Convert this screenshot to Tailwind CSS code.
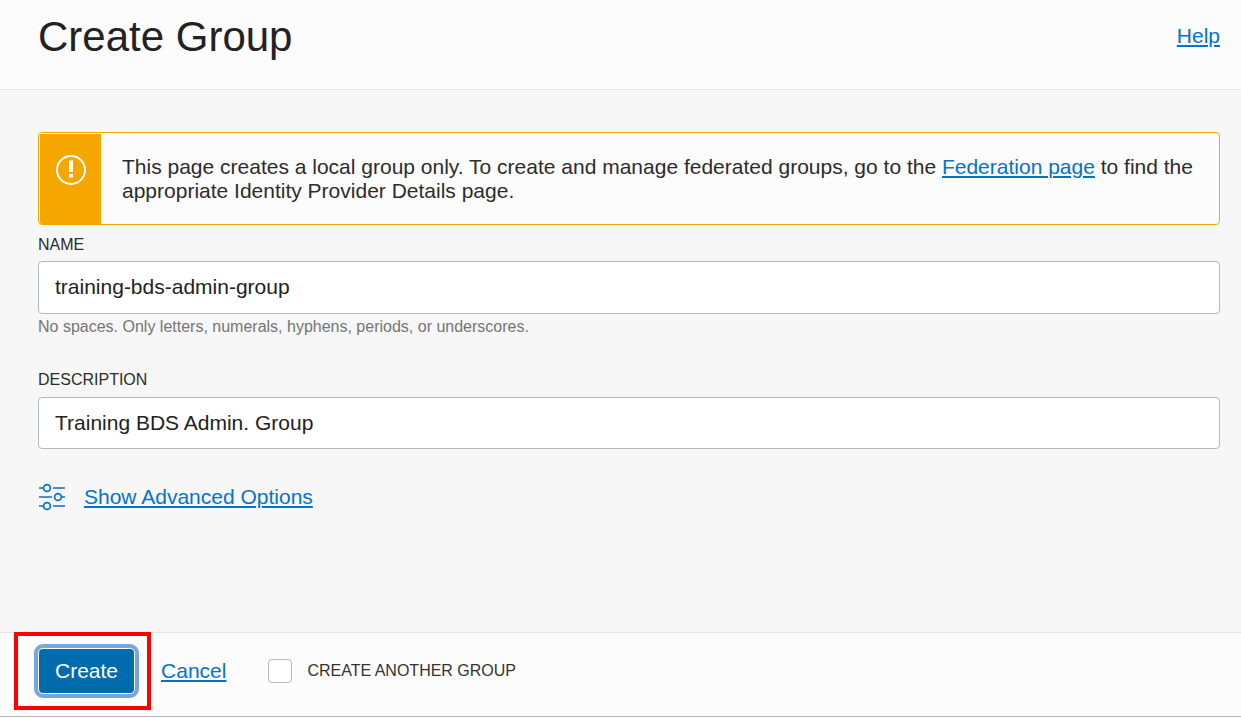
<!DOCTYPE html>
<html lang="en">
<head>
<meta charset="utf-8">
<meta name="viewport" content="width=device-width, initial-scale=1">
<title>Create Group</title>
<script src="https://cdn.jsdelivr.net/npm/@tailwindcss/browser@4"></script>
</head>
<body class="bg-[#fcfcfc] font-['Liberation_Sans',Arial,sans-serif] text-[21px] leading-6 text-[#2c2c2c]">
<form class="flex min-h-screen flex-col pb-px">
  <header class="flex items-start justify-between border-b border-[#e4e4e4] pt-3 pr-[21px] pb-7 pl-[38px]">
    <h1 class="text-[42px] leading-[49px] text-[#222]">Create Group</h1>
    <a href="#" class="mt-3 text-[#0572ce] underline decoration-2 underline-offset-2">Help</a>
  </header>

  <main class="flex grow flex-col bg-[#f7f7f7] pt-[42px] pr-[21px] pb-10 pl-[38px]">
    <div role="alert" class="flex rounded border border-[#f5a700] bg-[#fcfcfc] pt-px pl-px">
      <div class="flex w-[61px] shrink-0 justify-center rounded-bl-[2px] bg-[#f5a700] pt-[21px]">
        <svg class="size-[30px]" viewBox="0 0 30 30" fill="none" aria-hidden="true">
          <circle cx="15" cy="15" r="14" stroke="#fff" stroke-width="2"/>
          <path d="M13 5.500h4v11.500h-4zM13 19h4v3.500h-4z" fill="#fff"/>
        </svg>
      </div>
      <p class="py-[21px] pr-5 pl-[21px]">This page creates a local group only. To create and manage federated groups, go to the <a href="#" class="text-[#0572ce] underline decoration-2 underline-offset-2">Federation page</a> to find the appropriate Identity Provider Details page.</p>
    </div>

    <label for="name" class="mt-2 text-base leading-6">NAME</label>
    <input id="name" type="text" value="training-bds-admin-group" aria-describedby="name-hint" class="mt-1 h-[53px] w-full rounded border border-[#b3b8c2] bg-white px-4 pb-0.5 text-[#222] outline-none">
    <p id="name-hint" class="mt-px text-base leading-6 text-[#757575]">No spaces. Only letters, numerals, hyphens, periods, or underscores.</p>

    <label for="description" class="mt-[29px] text-base leading-6">DESCRIPTION</label>
    <input id="description" type="text" value="Training BDS Admin. Group" class="mt-[5px] h-[52px] w-full rounded border border-[#b3b8c2] bg-white px-4 text-[#222] outline-none">

    <div class="mt-[34px] flex items-center gap-[19px] pl-px text-[#0572ce]">
      <svg class="h-7 w-[26px]" viewBox="0 0 26 28" fill="none" stroke="currentColor" stroke-width="1.700" aria-hidden="true">
        <path d="M0 5h4.500M14 5h12M0 14h13M22.500 14H26M0 23h4.500M14 23h12"/>
        <circle cx="8" cy="5" r="3.400"/>
        <circle cx="19" cy="14" r="3.400"/>
        <circle cx="8" cy="23" r="3.400"/>
      </svg>
      <a href="#" class="underline decoration-2 underline-offset-2">Show Advanced Options</a>
    </div>
  </main>

  <footer class="flex items-center border-y border-t-[#e4e4e4] border-b-[#b3b8c2] pt-[11px] pb-[18px] pl-[34px]">
    <div class="relative">
      <button type="button" class="block h-[54px] rounded-[9px] border-4 border-[#76a6e2] bg-white p-px text-white outline-none"><span class="flex h-full items-center rounded-[4px] bg-[#006bad] px-4">Create</span></button>
      <span class="pointer-events-none absolute -top-3 -right-3 -bottom-3 -left-5 border-4 border-[#ff0000]"></span>
    </div>
    <a href="#" class="ml-[22px] text-[#0572ce] underline decoration-2 underline-offset-2">Cancel</a>
    <label class="ml-[42px] flex items-center gap-[15px] text-base text-[#333]">
      <input type="checkbox" class="size-6 appearance-none rounded border border-[#b3b8c2] bg-white">
      CREATE ANOTHER GROUP
    </label>
  </footer>
</form>
</body>
</html>
